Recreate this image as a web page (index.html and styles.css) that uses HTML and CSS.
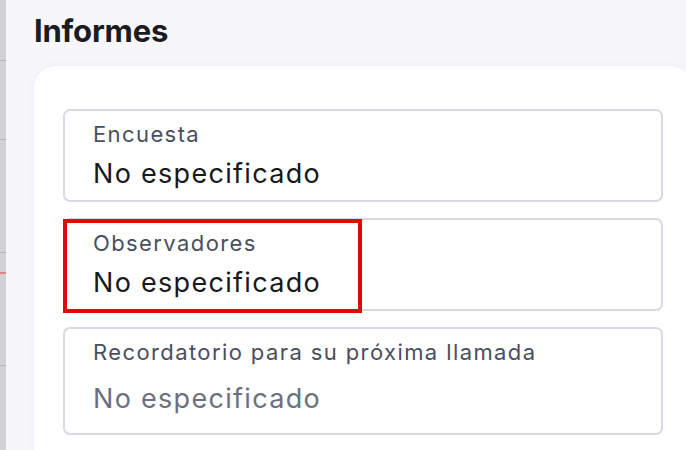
FILE: index.html
```html
<!DOCTYPE html>
<html lang="es">
<head>
<meta charset="utf-8">
<title>Informes</title>
<link rel="stylesheet" href="styles.css">
</head>
<body>
<div class="page">
  <aside class="rail">
    <span class="tick t1"></span>
    <span class="tick t2"></span>
    <span class="tick t3"></span>
    <span class="tick t4 red"></span>
    <span class="tick t5"></span>
  </aside>
  <main class="main">
    <h1 class="title">Informes</h1>
    <section class="card">
      <div class="field">
        <div class="label">Encuesta</div>
        <div class="value">No especificado</div>
      </div>
      <div class="field highlighted">
        <div class="label">Observadores</div>
        <div class="value">No especificado</div>
        <div class="mark"></div>
      </div>
      <div class="field">
        <div class="label">Recordatorio para su próxima llamada</div>
        <div class="value placeholder">No especificado</div>
      </div>
      <div class="field">
        <div class="label">&nbsp;</div>
        <div class="value">&nbsp;</div>
      </div>
    </section>
  </main>
</div>
</body>
</html>
```
FILE: styles.css
```css
html, body {
  margin: 0;
  padding: 0;
  height: 100%;
  overflow: hidden;
}
body {
  background: #f7f6fb;
  font-family: Inter, "Noto Sans", "Liberation Sans", sans-serif;
}
.page {
  display: flex;
  height: 450px;
}
.rail {
  position: relative;
  width: 6px;
  flex: 0 0 6px;
  background: #cfd2d7;
}
.tick {
  position: absolute;
  left: 0;
  width: 6px;
  height: 1px;
  background: #b3b7be;
}
.tick.t1 { top: 60px; }
.tick.t2 { top: 139px; }
.tick.t3 { top: 252px; }
.tick.t4 { top: 272px; height: 2px; }
.tick.t5 { top: 365px; }
.tick.red { background: #e2897f; }
.main {
  flex: 0 0 auto;
  padding-left: 28px;
}
.title {
  margin: 0;
  padding-top: 13px;
  font-size: 31px;
  line-height: 36px;
  font-weight: 700;
  color: #1b1b21;
  letter-spacing: -0.2px;
}
.card {
  margin-top: 17px;
  width: 600px;
  background: #ffffff;
  border-radius: 22px;
  padding: 43px 29px 40px 29px;
  box-shadow: 0 0 6px rgba(120, 110, 160, 0.08);
  display: flex;
  flex-direction: column;
  gap: 16px;
}
.field {
  position: relative;
  border: 2px solid #d7d9e5;
  border-radius: 7px;
  padding: 10.5px 28px 11.5px 28px;
}
.label {
  font-size: 22px;
  line-height: 25px;
  color: #4a4f5c;
  letter-spacing: 1.4px;
}
.value {
  margin-top: 12px;
  font-size: 27px;
  line-height: 30px;
  color: #18181d;
  letter-spacing: 1.3px;
}
.value.placeholder {
  color: #6c707e;
  padding: 7px 0 8px 0;
}
.mark {
  position: absolute;
  left: -2px;
  top: -1px;
  width: 291px;
  height: 86px;
  border: 4px solid #e10a0a;
}
```
